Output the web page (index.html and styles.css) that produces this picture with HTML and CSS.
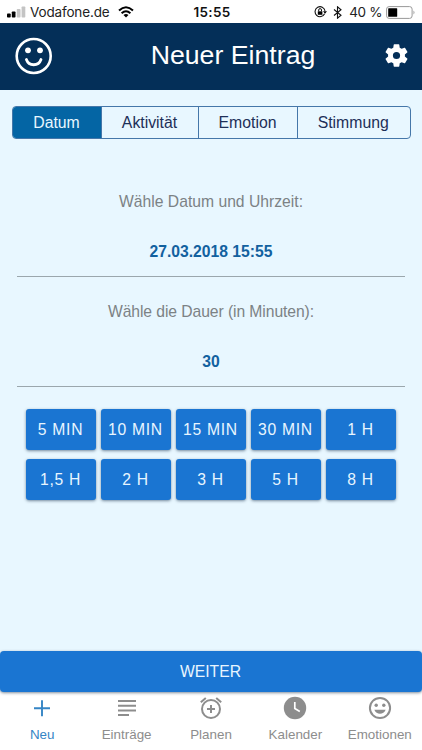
FILE: index.html
```html
<!DOCTYPE html>
<html lang="de">
<head>
<meta charset="utf-8">
<title>Neuer Eintrag</title>
<link rel="stylesheet" href="styles.css">
</head>
<body>
<div class="status">
  <div class="status-left">
    <svg width="19" height="12" viewBox="0 0 19 12"><rect x="0" y="7.5" width="3.7" height="4" rx=".8"/><rect x="4.8" y="5.5" width="3.7" height="6" rx=".8"/><g fill="#c4c4c4"><rect x="9.8" y="3" width="3.7" height="8.5" rx=".8"/><rect x="14.6" y="0.5" width="3.7" height="11" rx=".8"/></g></svg>
    <span class="carrier">Vodafone.de</span>
    <svg class="wifi" width="16" height="12" viewBox="0 0 16 12"><g fill="none" stroke="#000" stroke-width="2"><path d="M1 4.6Q8-2 15 4.6M3.6 7.2Q8 3.2 12.4 7.2"/></g><path d="M5.5 9Q8 7 10.500 9L8 11.500z"/></svg>
  </div>
  <b class="time">15:55</b>
  <div class="status-right">
    <svg width="13" height="12" viewBox="0 0 13 12"><path d="M10.600 7.800A5 5 0 1 1 11 4.800" fill="none" stroke="#111" stroke-width="1.100"/><path d="M9 5.200h4L11 7.700z"/><rect x="3.800" y="5.300" width="4.600" height="3.500"/><path d="M4.700 5.300V4a1.400 1.400 0 0 1 2.800 0v1.300" fill="none" stroke="#111"/></svg>
    <svg class="bt" width="9" height="13" viewBox="0 0 9 13"><path d="M1 3.500l7 5.700-3.500 3V.8L8 3.800 1 9.500" fill="none" stroke="#111" stroke-width="1.100"/></svg>
    <span class="percent">40 %</span>
    <svg width="30" height="13" viewBox="0 0 30 13"><rect x=".6" y=".6" width="25.500" height="11.800" rx="2.500" fill="#fff" stroke="#999"/><rect x="2.200" y="2.200" width="9" height="8.600" rx=".6"/><path d="M27.500 4.500q2 2 0 4z" fill="#999"/></svg>
  </div>
</div>
<header class="header">
  <svg class="smiley" width="38" height="38" viewBox="0 0 38 38"><circle cx="18.700" cy="19" r="17" fill="none" stroke="#fff" stroke-width="2.600"/><circle cx="13" cy="13.300" r="2.900" fill="#fff"/><circle cx="25" cy="13.300" r="2.900" fill="#fff"/><path d="M11.400 22.500c2.500 7 12.100 7 14.600 0" fill="none" stroke="#fff" stroke-width="2.800" stroke-linecap="round"/></svg>
  <h1>Neuer Eintrag</h1>
  <svg class="gear" width="27" height="27" viewBox="0 0 24 24"><path fill="#fff" d="M19.430 12.980c.04-.32.07-.64.07-.98s-.03-.66-.07-.98l2.110-1.650c.19-.15.24-.42.12-.64l-2-3.460c-.12-.22-.39-.3-.61-.22l-2.490 1c-.52-.4-1.080-.73-1.690-.98l-.38-2.650C14.460 2.180 14.250 2 14 2h-4c-.25 0-.46.18-.49.420l-.38 2.650c-.61.25-1.170.59-1.690.98l-2.490-1c-.23-.09-.49 0-.61.22l-2 3.460c-.13.22-.07.49.12.64l2.110 1.650c-.04.32-.07.65-.07.98s.03.66.07.98l-2.110 1.650c-.19.15-.24.42-.12.64l2 3.460c.12.22.39.3.61.22l2.490-1c.52.4 1.080.73 1.690.98l.38 2.650c.03.24.24.42.49.42h4c.25 0 .46-.18.49-.42l.38-2.650c.61-.25 1.170-.59 1.690-.98l2.490 1c.23.09.49 0 .61-.22l2-3.460c.12-.22.07-.49-.12-.64l-2.110-1.650zM12 15.200a3.200 3.200 0 1 1 0-6.400 3.200 3.200 0 0 1 0 6.400z"/></svg>
</header>
<main class="main">
  <nav class="tabs"><span class="tab active">Datum</span><span class="tab">Aktivität</span><span class="tab">Emotion</span><span class="tab">Stimmung</span></nav>
  <section class="field"><p class="label">Wähle Datum und Uhrzeit:</p><p class="value">27.03.2018 15:55</p></section>
  <section class="field"><p class="label duration">Wähle die Dauer (in Minuten):</p><p class="value">30</p></section>
  <div class="grid">
    <button>5 MIN</button><button>10 MIN</button><button>15 MIN</button><button>30 MIN</button><button>1 H</button>
    <button>1,5 H</button><button>2 H</button><button>3 H</button><button>5 H</button><button>8 H</button>
  </div>
  <button class="next">WEITER</button>
</main>
<footer class="bottom">
  <div class="item current"><svg width="26" height="26" viewBox="0 0 26 26"><path d="M13 5.200v16M5 13.200h16" stroke="currentColor" stroke-width="1.900"/></svg><span>Neu</span></div>
  <div class="item"><svg width="26" height="26" viewBox="0 0 26 26"><path d="M4 6h18M4 10.800h18M4 15.600h18M4 20h11" stroke="currentColor" stroke-width="2"/></svg><span>Einträge</span></div>
  <div class="item"><svg width="26" height="26" viewBox="0 0 26 26"><g fill="none" stroke="currentColor" stroke-width="2"><circle cx="13" cy="14" r="9"/><path d="M13 10v8M9 14h8M2.800 7.300l5-4.200M23.200 7.300l-5-4.200"/></g></svg><span>Planen</span></div>
  <div class="item"><svg width="26" height="26" viewBox="0 0 26 26"><circle cx="13" cy="13" r="11.200" fill="currentColor"/><path d="M12.800 7v6.500l5 3" fill="none" stroke="#fff" stroke-width="1.700"/></svg><span>Kalender</span></div>
  <div class="item"><svg width="26" height="26" viewBox="0 0 26 26"><circle cx="13" cy="13" r="10.100" fill="none" stroke="currentColor" stroke-width="2"/><circle cx="9.200" cy="10.200" r="1.700" fill="currentColor"/><circle cx="16.800" cy="10.200" r="1.700" fill="currentColor"/><path d="M7.300 14.800h11.400c-2 5.400-9.400 5.400-11.400 0z" fill="currentColor"/></svg><span>Emotionen</span></div>
</footer>
</body>
</html>
```
FILE: styles.css
```css
* { box-sizing: border-box; }
body {
  margin: 0;
  width: 422px;
  height: 750px;
  display: flex;
  flex-direction: column;
  overflow: hidden;
  background: #fff;
  font-family: "Liberation Sans", Arial, sans-serif;
}
svg { display: block; flex: none; }
.status {
  height: 23px;
  flex: none;
  padding: 1px 6px 0 7px;
  display: grid;
  grid-template-columns: 1fr auto 1fr;
  align-items: center;
  font: 13.5px Inter, sans-serif;
  color: #222;
}
.status-left, .status-right { display: flex; align-items: center; }
.status-right { justify-content: flex-end; }
.carrier { margin-left: 4px; letter-spacing: -0.15px; }
.wifi { margin-left: 8px; }
.time { font-weight: 600; font-size: 13.5px; color: #111; letter-spacing: 0.3px; padding-left: 1px; }
.bt { margin-left: 6px; }
.percent { margin: 0 4px 0 7px; white-space: nowrap; letter-spacing: -0.4px; }
.header {
  height: 67px;
  flex: none;
  background: #042f58;
  color: #fff;
  display: flex;
  align-items: center;
  justify-content: space-between;
  padding: 0 12px 0 15px;
}
.smiley { margin-bottom: 1px; }
h1 { margin: 0 0 4px 30px; font-size: 26.7px; font-weight: 400; line-height: 32px; }
.gear { margin-bottom: 3px; }
.main {
  flex: 1;
  background: #e8f7ff;
  display: flex;
  flex-direction: column;
  padding-top: 16px;
}
.tabs {
  display: grid;
  grid-template-columns: 88px 97px 99px 1fr;
  height: 33px;
  margin: 0 11.5px 0 12px;
  border: 1px solid #4577a9;
  border-radius: 4px;
  overflow: hidden;
  flex: none;
}
.tab {
  display: flex;
  align-items: center;
  justify-content: center;
  padding-right: 1px;
  font-size: 15.8px;
  color: #1d2f58;
}
.tab + .tab { border-left: 1px solid #4577a9; }
.tab.active { background: #0465a4; color: #e8f7ff; }
.field {
  height: 110px;
  margin: 0 17px;
  border-bottom: 1px solid #9ba7ad;
  text-align: center;
  display: flex;
  flex-direction: column;
  justify-content: flex-end;
  flex: none;
}
.tabs + .field { height: 138px; }
.field p { margin: 0; line-height: 20px; font-size: 15.7px; }
.label { color: #7c8285; }
.duration { letter-spacing: -0.08px; }
.field .value { margin: 30px 0 14px; color: #12619f; font-weight: 700; }
.grid {
  display: grid;
  grid-template-columns: repeat(5, 70px);
  gap: 9px 5px;
  margin: 22px 0 0 26px;
}
button {
  height: 41px;
  padding: 0 1px 0 0;
  border: 0;
  border-radius: 3px;
  background: #1a75d2;
  color: #e8f5ff;
  font: 15.7px "Liberation Sans", Arial, sans-serif;
  letter-spacing: 0.7px;
  box-shadow: 0 1px 3px rgba(0, 30, 60, 0.5);
}
.next { margin-top: auto; letter-spacing: 0; border-radius: 4px; }
.bottom {
  height: 58px;
  flex: none;
  display: grid;
  grid-template-columns: repeat(5, 1fr);
  padding-top: 3px;
}
.item {
  display: flex;
  flex-direction: column;
  align-items: center;
  color: #8d8d8d;
  font-size: 13.4px;
  line-height: 16px;
}
.item span { margin-top: 6px; }
.current { color: #3585c5; }
```
